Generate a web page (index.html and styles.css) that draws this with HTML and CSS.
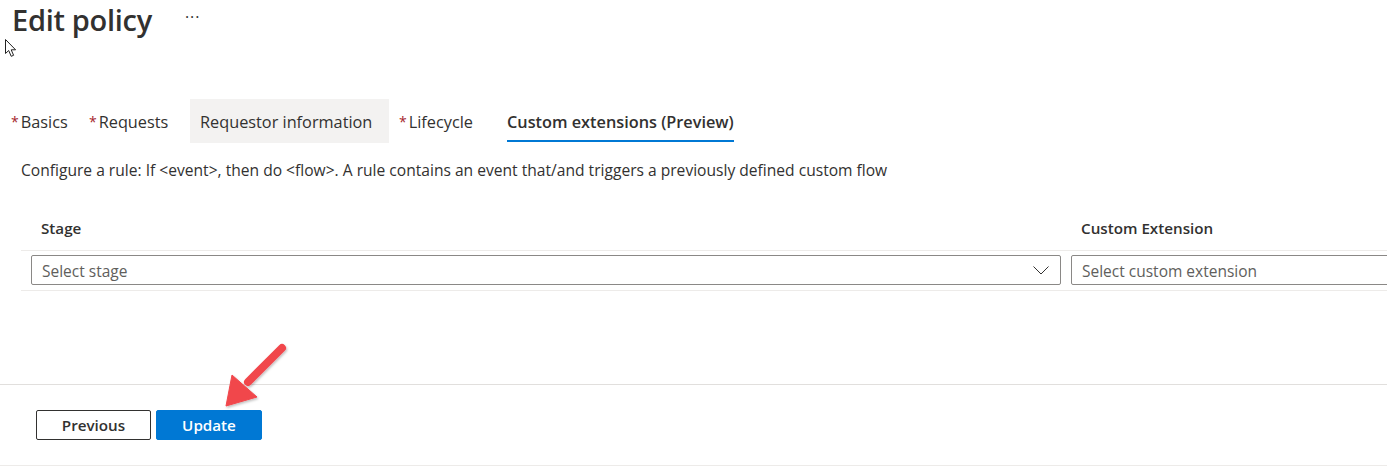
FILE: index.html
```html
<!DOCTYPE html>
<html lang="en">
<head>
<meta charset="utf-8">
<title>Edit policy</title>
<link rel="stylesheet" href="styles.css">
</head>
<body>
<div class="page">
  <header class="header">
    <h1 class="title">Edit policy</h1>
    <span class="more">···</span>
    <svg class="cursor" width="14" height="19" viewBox="0 0 14 19"><path d="M0.5 0.5 L0.5 14.5 L3.7 11.5 L6.2 17.3 L8.6 16.3 L6.2 10.8 L10.6 10.8 Z" fill="#fff" stroke="#222" stroke-width="1" stroke-linejoin="round"/></svg>
  </header>

  <nav class="tabs">
    <div class="tab tab-basics"><span class="req">*</span>Basics</div>
    <div class="tab tab-requests"><span class="req">*</span>Requests</div>
    <div class="tab tab-requestor is-hover">Requestor information</div>
    <div class="tab tab-lifecycle"><span class="req">*</span>Lifecycle</div>
    <div class="tab tab-custom is-active"><span class="tab-label">Custom extensions (Preview)</span></div>
  </nav>

  <p class="desc">Configure a rule: If &lt;event&gt;, then do &lt;flow&gt;. A rule contains an event that/and triggers a previously defined custom flow</p>

  <div class="grid">
    <div class="row row-head">
      <div class="cell cell-stage"><span class="head-label">Stage</span></div>
      <div class="cell cell-ext"><span class="head-label">Custom Extension</span></div>
    </div>
    <div class="row row-data">
      <div class="cell cell-stage">
        <div class="select">
          <span class="placeholder">Select stage</span>
          <svg class="chevron" width="16" height="9" viewBox="0 0 16 9"><path d="M0.5 0.5 L8 8 L15.5 0.5" fill="none" stroke="#323130" stroke-width="1"/></svg>
        </div>
      </div>
      <div class="cell cell-ext">
        <div class="select select-wide">
          <span class="placeholder">Select custom extension</span>
        </div>
      </div>
    </div>
  </div>

  <footer class="footer">
    <button class="btn btn-secondary">Previous</button>
    <button class="btn btn-primary">Update</button>
  </footer>

  <svg class="arrow" width="80" height="80" viewBox="0 0 80 80">
    <defs>
      <filter id="sh" x="-20%" y="-20%" width="140%" height="140%">
        <feDropShadow dx="1" dy="1.5" stdDeviation="1.2" flood-color="#000" flood-opacity="0.25"/>
      </filter>
    </defs>
    <g filter="url(#sh)" fill="#f1474c" stroke="#f1474c">
      <line x1="62" y1="12" x2="28" y2="46" stroke-width="8" stroke-linecap="round"/>
      <polygon points="6,70 12,39 37,61" stroke-width="1" stroke-linejoin="round"/>
    </g>
  </svg>
</div>
</body>
</html>
```

FILE: styles.css
```css
html, body {
  margin: 0;
  padding: 0;
  overflow: hidden;
  background: #fff;
}

.page {
  position: relative;
  width: 1387px;
  height: 466px;
  overflow: hidden;
  font-family: "Open Sans", "Noto Sans", sans-serif;
  color: #323130;
}

.header {
  position: relative;
  height: 99px;
  display: flex;
  align-items: flex-start;
  padding-left: 12px;
  box-sizing: border-box;
}

.title {
  margin: 0;
  font-size: 29px;
  line-height: 40px;
  font-weight: 600;
  color: #323130;
  letter-spacing: -0.3px;
}

.more {
  margin-left: 33px;
  margin-top: 7px;
  font-size: 16px;
  line-height: 20px;
  color: #323130;
  letter-spacing: 1px;
}

.cursor {
  position: absolute;
  left: 5px;
  top: 39px;
}

.tabs {
  display: flex;
  height: 44px;
  padding-left: 1px;
}

.tab {
  box-sizing: border-box;
  height: 44px;
  padding-left: 10px;
  font-size: 16.3px;
  line-height: 46px;
  white-space: nowrap;
  color: #323130;
}

.req {
  color: #a4262c;
  font-size: 14px;
  margin-right: 2px;
  margin-left: 0;
  vertical-align: 1px;
}

.tab-basics { width: 78px; }
.tab-requests { width: 111px; }
.tab-requestor { width: 199px; }
.tab-lifecycle { width: 108px; }
.tab-custom { width: 260px; }

.is-hover {
  background: #f3f2f1;
}

.is-active {
  font-weight: 600;
}

.tab-label {
  display: inline-block;
  height: 41px;
  border-bottom: 2px solid #0078d4;
  line-height: 46px;
}

.desc {
  margin: 16px 0 0 21px;
  font-size: 15.6px;
  line-height: 22px;
  color: #323130;
  white-space: nowrap;
}

.grid {
  margin: 29px 0 0 21px;
  width: 1480px;
}

.row {
  display: flex;
  border-bottom: 1px solid #edebe9;
}

.row-head {
  height: 41px;
  box-sizing: border-box;
  align-items: flex-start;
  padding-top: 7px;
}

.row-data {
  height: 40px;
  box-sizing: border-box;
  padding-top: 4px;
}

.cell {
  box-sizing: border-box;
}

.cell-stage {
  width: 1045px;
  padding-left: 10px;
  padding-right: 5px;
}

.cell-ext {
  width: 420px;
  padding-left: 5px;
}

.head-label {
  display: block;
  padding-left: 10px;
  font-size: 15.2px;
  line-height: 22px;
  font-weight: 600;
}

.select {
  height: 30px;
  box-sizing: border-box;
  border: 1px solid #8a8886;
  border-radius: 2px;
  display: flex;
  align-items: center;
  justify-content: space-between;
  padding: 0 10px 0 10px;
}

.placeholder {
  font-size: 15.5px;
  color: #605e5c;
  line-height: 22px;
  margin-top: 2px;
}

.chevron {
  margin-right: 1px;
  margin-top: 1px;
}

.footer {
  margin-top: 93px;
  border-top: 1px solid #e1dfdd;
  border-bottom: 1px solid #edebe9;
  padding: 25px 0 25px 36px;
  display: flex;
  gap: 5px;
}

.btn {
  height: 30px;
  box-sizing: border-box;
  border-radius: 2px;
  font-family: "Open Sans", "Noto Sans", sans-serif;
  font-size: 15.2px;
  font-weight: 600;
  padding: 0;
  cursor: pointer;
}

.btn-secondary {
  width: 115px;
  background: #fff;
  border: 1px solid #323130;
  color: #323130;
}

.btn-primary {
  width: 106px;
  background: #0078d4;
  border: 1px solid #0078d4;
  color: #fff;
}

.arrow {
  position: absolute;
  left: 220px;
  top: 336px;
}
```
